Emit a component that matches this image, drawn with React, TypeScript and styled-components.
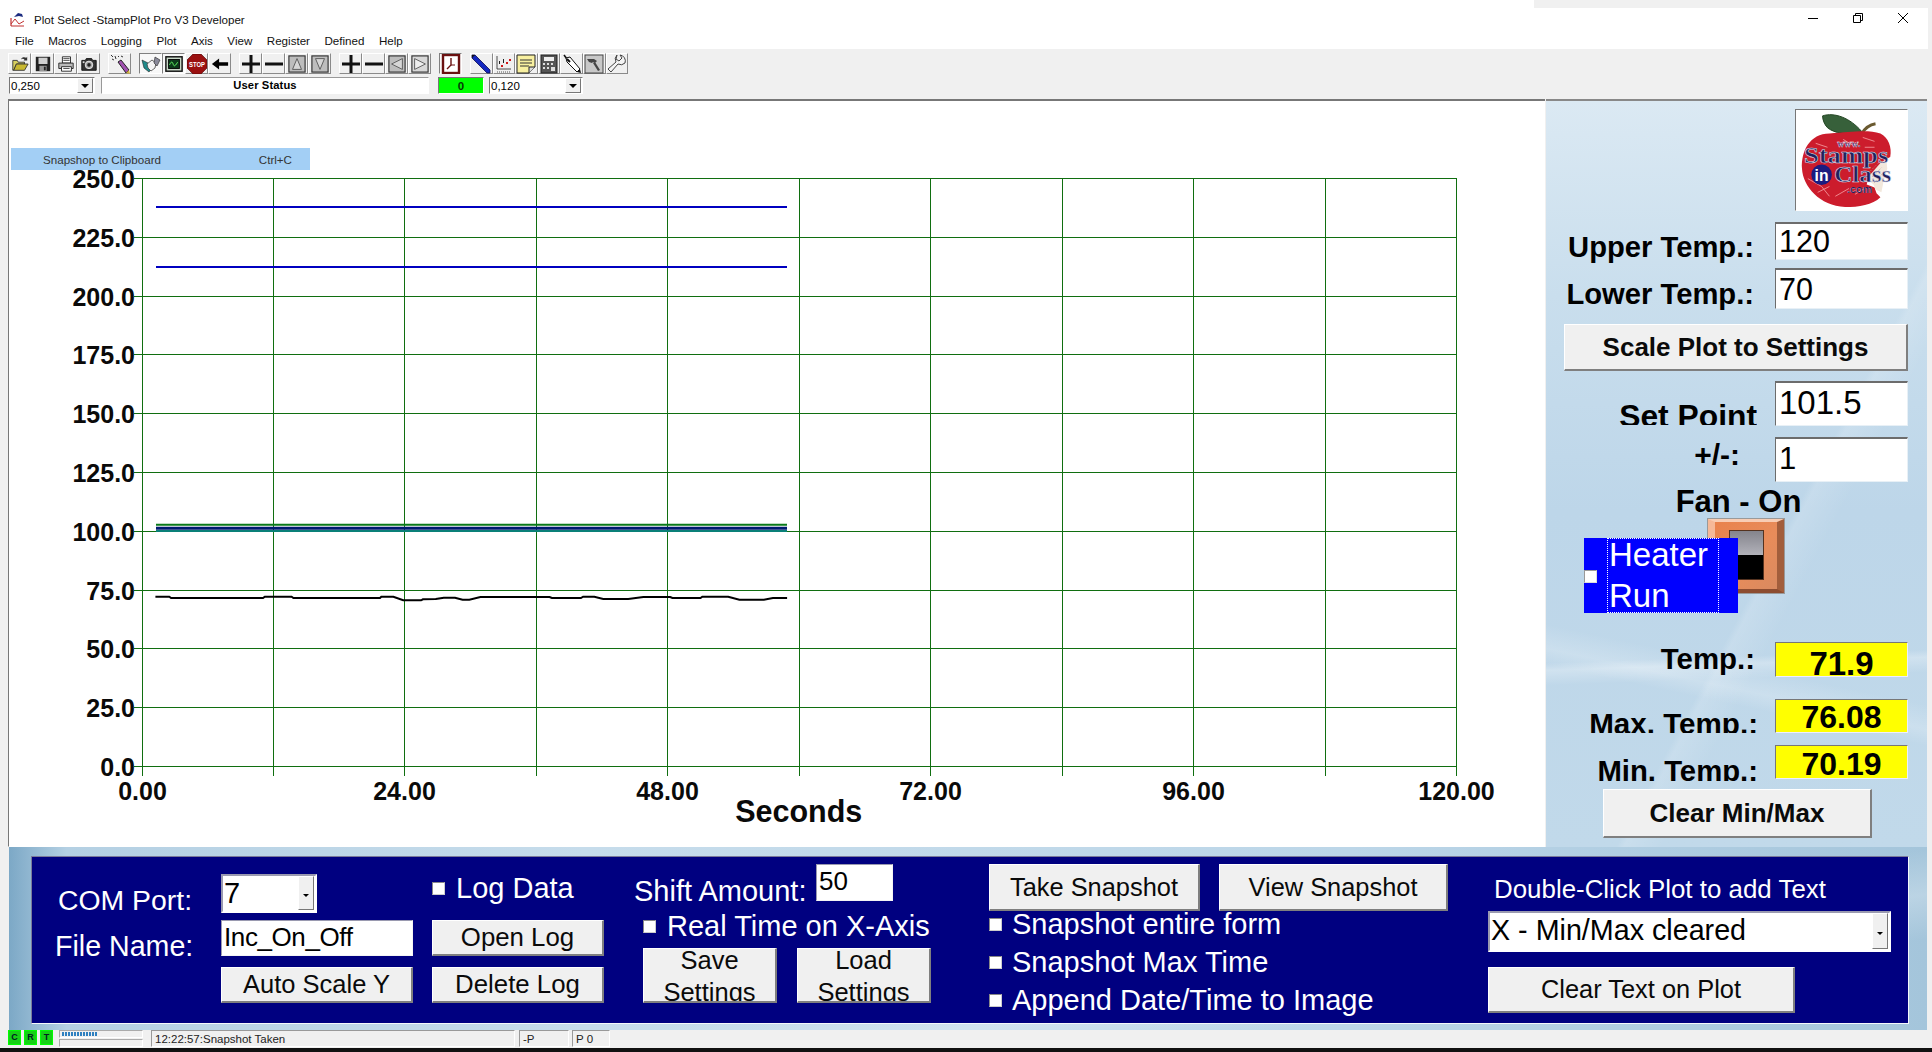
import React from 'react';
import styled, { createGlobalStyle } from 'styled-components';

const SANS = '"Liberation Sans", Arial, sans-serif';

const Global = createGlobalStyle`
  html, body { margin: 0; padding: 0; background: #f0f0f0; overflow: hidden; }
  * { box-sizing: border-box; }
  #root { width: 1932px; height: 1052px; }
`;

const Page = styled.div`
  width: 1932px; height: 1052px; display: flex; flex-direction: column;
  background: #f0f0f0; font-family: ${SANS}; color: #000; overflow: hidden;
`;

/* ---------- title + menu ---------- */
const Header = styled.header`
  height: 49px; margin-right: 4px; background: #fff; display: flex; flex-direction: column;
`;
const TopStrip = styled.div`
  height: 8px; margin-left: 1534px; margin-right: -4px; background: #f0f0f0;
`;
const TitleRow = styled.div`
  height: 23px; display: flex; align-items: center; padding: 0 0 0 10px; font-size: 11.6px; color: #111;
`;
const TitleText = styled.span`
  margin-left: 9px; flex: 1;
`;
const WinButtons = styled.div`
  display: flex; gap: 35px; padding-right: 20px; align-items: center; margin-top: -3px;
`;
const MenuRow = styled.nav`
  height: 18px; display: flex; gap: 14.5px; padding-left: 15px; font-size: 11.6px; align-items: center; color: #111;
`;

/* ---------- toolbar ---------- */
const Toolbar = styled.div`
  height: 50px; padding: 4px 0 0 8px; display: flex; flex-direction: column; gap: 3px;
`;
const ToolRow = styled.div`
  display: flex; height: 21px; gap: 8px;
`;
const ToolGroup = styled.div`
  display: flex;
`;
const ToolBtn = styled.div<{ $pressed?: boolean; $w?: number }>`
  width: ${p => p.$w ?? 23}px; height: 21px; display: flex; align-items: center; justify-content: center;
  background: ${p => (p.$pressed ? '#f8f8f8' : '#f0f0f0')};
  border-style: solid; border-width: 1px;
  border-color: ${p => (p.$pressed ? '#808080 #fff #fff #808080' : '#fff #8a8a8a #8a8a8a #fff')};
`;
const StatusRow = styled.div`
  display: flex; height: 17px; align-items: stretch;
`;
const SmallCombo = styled.div<{ $w: number; $ml?: number }>`
  width: ${p => p.$w}px; margin-left: ${p => p.$ml ?? 0}px; display: flex; background: #fff;
  border: 1px solid; border-color: #777 #fff #fff #777; font-size: 11.5px; line-height: 16px; padding-left: 1px;
`;
const SmallComboText = styled.span`
  flex: 1;
`;
const SmallDrop = styled.span`
  width: 16px; margin: 0 1px 0 0; background: #f0f0f0; display: flex; align-items: center; justify-content: center;
  border: 1px solid; border-color: #fff #777 #777 #fff;
`;
const DropArrow = styled.i<{ $s?: number }>`
  display: block; width: 0; height: 0;
  border-left: ${p => p.$s ?? 4}px solid transparent; border-right: ${p => p.$s ?? 4}px solid transparent;
  border-top: ${p => p.$s ?? 4}px solid #000;
`;
const UserStatus = styled.div`
  width: 328px; margin-left: 6px; background: #fff; border: 1px solid; border-color: #999 #fff #fff #999;
  text-align: center; font-weight: 700; font-size: 11.2px; line-height: 15px; letter-spacing: .1px;
`;
const GreenBox = styled.div`
  width: 46px; margin-left: 9px; background: #0f0; border: 1px solid; border-color: #777 #fff #fff #777;
  text-align: center; font-weight: 700; font-size: 11.5px; line-height: 16px; color: #063806;
`;

/* ---------- main ---------- */
const Main = styled.div`
  height: 748px; display: flex; padding-left: 8px; padding-right: 5px;
`;
const PlotArea = styled.div`
  position: relative; width: 1537px; height: 100%; background: #fff;
  border-left: 1px solid #777; border-top: 2px solid #777; border-bottom: 1px solid #fff;
`;
const ChartSvg = styled.svg`
  display: block; width: 100%; height: 100%;
`;
const MenuHighlight = styled.div`
  position: absolute; left: 2px; top: 47px; width: 299px; height: 22px; background: #a3cff5;
  display: flex; align-items: center; justify-content: space-between; padding: 0 18px 0 32px;
  font-size: 11.6px; color: #333;
`;

const SidePanel = styled.aside`
  width: 381px; margin-left: 1px; height: 100%; display: flex; flex-direction: column;
  padding: 8px 19px 0 18px; border-top: 2px solid #888;
  background:
    linear-gradient(118deg, transparent 60%, rgba(255,255,255,.14) 61%, transparent 66%),
    linear-gradient(178deg, transparent 74%, rgba(255,255,255,.28) 75%, transparent 77%),
    linear-gradient(12deg, transparent 22%, rgba(255,255,255,.2) 24%, transparent 27%),
    linear-gradient(180deg, #dbe9f3 0%, #c9deed 26%, #bdd6e9 55%, #c1d9ea 100%);
`;
const LogoFrame = styled.div`
  align-self: flex-end; width: 113px; height: 102px; background: #fff; margin-right: 0;
  border: 1px solid; border-color: #777 #fff #fff #777;
`;
const Row = styled.div<{ $mt: number; $h: number }>`
  display: flex; justify-content: flex-end; align-items: flex-start;
  margin-top: ${p => p.$mt}px; height: ${p => p.$h}px; flex: none;
`;
const SideLabel = styled.div<{ $fs?: number; $mr: number; $pt: number; $clip?: number }>`
  font-weight: 700; font-size: ${p => p.$fs ?? 29.2}px; line-height: ${p => (p.$fs ?? 29.2) * 1.12}px;
  margin-right: ${p => p.$mr}px; margin-top: ${p => p.$pt}px; white-space: nowrap;
  ${p => (p.$clip ? `height: ${p.$clip}px; overflow: hidden;` : '')}
`;
const SideField = styled.div<{ $fs?: number; $pt: number }>`
  width: 133px; height: 100%; background: #fff; border: 1px solid; border-color: #6c6c6c #e8f0f6 #e8f0f6 #6c6c6c;
  border-top-width: 2px; border-left-width: 1px; overflow: hidden;
  font-size: ${p => p.$fs ?? 31}px; line-height: 34px; padding: ${p => p.$pt}px 0 0 3px;
`;
const YellowField = styled.div<{ $fs?: number; $pt: number }>`
  width: 133px; height: 100%; background: #ff0; border: 1px solid; border-color: #777 #eef #eef #777; overflow: hidden;
  font-weight: 700; font-size: ${p => p.$fs ?? 32}px; line-height: 34px; text-align: center; padding-top: ${p => p.$pt}px;
`;
const GreyButton = styled.div<{ $fs: number; $bold?: boolean; $w?: number; $mr?: number }>`
  ${p => (p.$w ? `width: ${p.$w}px;` : 'width: 100%;')} height: 100%; background: #f0f0f0; flex: none;
  margin-right: ${p => p.$mr ?? 0}px;
  display: flex; align-items: center; justify-content: center;
  border: 1px solid; border-color: #fff #7f7f7f #7f7f7f #fff; border-width: 1px 2px 2px 1px;
  font-size: ${p => p.$fs}px; font-weight: ${p => (p.$bold ? 700 : 400)}; white-space: nowrap; color: #0a0a0a;
`;
const FanTitle = styled.div`
  margin-top: 2px; height: 34px; padding-left: 5px; text-align: center; font-weight: 700; font-size: 31px; line-height: 36px; flex: none;
`;
const ToggleZone = styled.div`
  position: relative; margin-top: 1px; height: 94px; padding-left: 144px; flex: none;
`;
const CopperFrame = styled.div`
  width: 76px; height: 74px; padding: 8px 0 0 0; display: flex; justify-content: center;
  background: linear-gradient(135deg, #e9824c 0%, #e88c5a 55%, #d98a60 100%);
  border-style: solid; border-width: 3px 7px 4px 7px;
  border-color: #f8cdb4 #a25e3c #8c4c30 #f6b998;
  outline: 1px solid #999; outline-offset: 0;
`;
const SwitchWindow = styled.div`
  width: 35px; height: 50px; display: flex; flex-direction: column; border: 1px solid #54321f;
`;
const SwitchTop = styled.div`
  flex: 1; background: linear-gradient(180deg, #84848c 0%, #b2b2ba 100%);
`;
const SwitchBottom = styled.div`
  flex: 1; background: #000;
`;
const HeaterCheck = styled.div`
  position: absolute; left: 20px; top: 19px; width: 154px; height: 75px; background: #00f;
  display: flex; align-items: center; color: #fff;
`;
const HeaterBoxIcon = styled.div`
  width: 13px; height: 13px; background: #fff; border: 1px solid; border-color: #999 #ddd #ddd #999; margin-right: 10px; flex: none; margin-top: 2px;
`;
const HeaterLabel = styled.div`
  width: 112px; height: 75px; border: 1px dotted #fff; padding-left: 1px; font-size: 33px; line-height: 41px; overflow: hidden;
`;
const HeaterText = styled.div`
  margin-top: -5px;
`;

/* ---------- bottom ---------- */
const BottomPanel = styled.section`
  height: 183px; margin: 0 5px 0 9px; padding: 9px 18px 6px 22px; flex: none;
  background:
    linear-gradient(172deg, transparent 60%, rgba(255,255,255,.25) 70%, transparent 80%),
    linear-gradient(90deg, #7ca8c6 0, #b4d0e3 3%, #c6dceb 30%, #bcd6e8 70%, #a4c5db 100%);
`;
const Navy = styled.div`
  height: 168px; display: flex; background: #000080; color: #fff; border: 1px solid;
  border-color: #7a7a9a #f4f8fb #f4f8fb #7a7a9a;
`;
const Col = styled.div<{ $ml: number; $w: number; $pt: number }>`
  margin-left: ${p => p.$ml}px; width: ${p => p.$w}px; padding-top: ${p => p.$pt}px; display: flex; flex-direction: column; flex: none;
`;
const FlowRow = styled.div<{ $h: number; $mt?: number; $pl?: number }>`
  display: flex; align-items: flex-start; height: ${p => p.$h}px; flex: none;
  margin-top: ${p => p.$mt ?? 0}px; padding-left: ${p => p.$pl ?? 0}px;
`;
const FormLabel = styled.div<{ $w: number; $fs?: number; $pt?: number; $pl?: number }>`
  width: ${p => p.$w}px; flex: none; font-size: ${p => p.$fs ?? 28.4}px; line-height: 32px; white-space: nowrap;
  padding-top: ${p => p.$pt ?? 0}px; padding-left: ${p => p.$pl ?? 0}px;
`;
const ComboBox = styled.div<{ $w: number; $fs: number }>`
  width: ${p => p.$w}px; height: 100%; background: #fff; display: flex; color: #000;
  border: 2px solid; border-color: #9a9ab0 #fff #fff #9a9ab0;
  font-size: ${p => p.$fs}px; line-height: 34px; padding: 0 1px 1px 1px;
`;
const ComboText = styled.span`
  flex: 1; white-space: nowrap;
`;
const ComboDrop = styled.span`
  width: 16px; background: #f0f0f0; display: flex; align-items: center; justify-content: center;
  border: 1px solid; border-color: #fff #777 #777 #fff; padding-top: 4px;
`;
const WhiteField = styled.div<{ $w: number; $fs?: number; $ls?: number }>`
  width: ${p => p.$w}px; height: 100%; flex: none; background: #fff; color: #000; border: 1px solid;
  border-color: #9a9ab0 #f4f4f4 #f4f4f4 #9a9ab0; font-size: ${p => p.$fs ?? 28}px; line-height: 32px; padding-left: 2px;
  letter-spacing: ${p => p.$ls ?? 0}px;
`;
const CheckLine = styled.div<{ $h: number; $gap: number; $pl?: number; $mt?: number }>`
  display: flex; align-items: center; height: ${p => p.$h}px; gap: ${p => p.$gap}px; flex: none;
  padding-left: ${p => p.$pl ?? 0}px; margin-top: ${p => p.$mt ?? 0}px; font-size: 29px; line-height: 32px; white-space: nowrap;
`;
const CheckBox = styled.span`
  width: 13px; height: 13px; background: #fff; flex: none; border: 1px solid; border-color: #888 #ccc #ccc #888;
`;
const TwoLineBtn = styled.div<{ $w: number }>`
  width: ${p => p.$w}px; height: 100%; flex: none; background: #f0f0f0; color: #0a0a0a; overflow: hidden; text-align: center;
  border: 1px solid; border-color: #fff #7f7f7f #7f7f7f #fff; border-width: 1px 2px 2px 1px;
  font-size: 25.5px; line-height: 32px;
`;
const TwoLineText = styled.div`
  margin-top: -5px;
`;
const Gap = styled.span<{ $w: number }>`
  width: ${p => p.$w}px; flex: none;
`;

/* ---------- status ---------- */
const StatusBar = styled.footer`
  height: 18px; display: flex; padding-left: 8px; flex: none; font-size: 11.5px; color: #222;
`;
const Led = styled.span`
  width: 13px; height: 15px; margin-right: 3px; background: #16d016; border: 1px solid #0f0; color: #022; flex: none;
  font-weight: 700; font-size: 9px; line-height: 13px; text-align: center;
`;
const ProgressBox = styled.div`
  width: 84px; margin-left: 3px; height: 18px; display: flex; flex-direction: column; gap: 1px;
`;
const ProgressTrack = styled.div`
  height: 8px; border: 1px solid; border-color: #aaa #fff #fff #aaa; padding: 1px 0 0 2px;
`;
const ProgressFill = styled.div`
  width: 36px; height: 4px; background: repeating-linear-gradient(90deg, #2f80c0 0 2px, transparent 2px 3px);
`;
const Cell = styled.div<{ $w: number; $ml: number }>`
  width: ${p => p.$w}px; margin-left: ${p => p.$ml}px; height: 17px; flex: none; border: 1px solid;
  border-color: #999 #fff #fff #999; padding-left: 3px; line-height: 17px; overflow: hidden; white-space: nowrap;
`;
const Taskbar = styled.div`
  height: 4px; background: #111; flex: none;
`;

/* ---------- icons ---------- */
const Ico = ({ children, s = 18 }: { children: React.ReactNode; s?: number }) => (
  <svg width={s} height={s} viewBox="0 0 20 20" aria-hidden="true">{children}</svg>
);

const AppIcon = () => (
  <svg width="15" height="15" viewBox="0 0 15 15" aria-hidden="true">
    <path d="M1 14V6M1 14h13" stroke="#c03030" strokeWidth="1.2" fill="none" />
    <path d="M1 12L5 7l4 5 5-3" stroke="#c03030" strokeWidth="1" fill="none" />
    <path d="M4 5L8 1l4 1 1 3-4-1z" fill="#1c2c80" />
  </svg>
);

const icons: Record<string, React.ReactNode> = {
  open: <Ico><path d="M2 6h5l1 2h7v2H6l-3 7H2z" fill="#d8d060" stroke="#333" /><path d="M6 10h13l-4 7H3z" fill="#c8b830" stroke="#333" /><path d="M11 5c1-3 4-3 6-2l1-1v4h-4l1-1c-1-1-3-1-4 0z" fill="#333" /></Ico>,
  save: <Ico><rect x="2" y="2" width="16" height="16" fill="#222" /><rect x="5" y="3" width="10" height="7" fill="#cfcfcf" /><rect x="6" y="12" width="8" height="6" fill="#999" /><rect x="11" y="13" width="2" height="4" fill="#222" /></Ico>,
  print: <Ico><path d="M6 2h9v7H6z" fill="#fff" stroke="#222" /><path d="M7 4h7M7 6h7" stroke="#444" /><path d="M2 9h16v6H2z" fill="#bbb" stroke="#222" /><path d="M5 13h11v5H5z" fill="#fff" stroke="#222" /><path d="M7 15h7" stroke="#444" /></Ico>,
  cam: <Ico><path d="M2 6h4l1-2h6l1 2h4v11H2z" fill="#333" stroke="#111" /><circle cx="10" cy="11" r="4.2" fill="#aaa" stroke="#eee" /><circle cx="10" cy="11" r="2" fill="#222" /><rect x="3" y="7" width="2" height="2" fill="#ddd" /></Ico>,
  wand: <Ico s={20}><path d="M8 8l3-2 8 10-3 3z" fill="#a050b0" stroke="#222" /><path d="M16 19l3-3 1 4z" fill="#d0b040" /><path d="M2 5l2 1M5 2l1 3M1 1l2 2M8 3l1-1M11 2l2 1" stroke="#333" /></Ico>,
  hand: <Ico s={20}><path d="M1 6l6 3 4 5-3 4-5-4z" fill="#1f8a8a" stroke="#222" strokeWidth=".6" /><path d="M6 10l5-4 4 3-1 5-4 3-3-3z" fill="#f4f4f4" stroke="#444" strokeWidth=".8" /><path d="M14 3l5 3-3 6-3-3z" fill="#8a8a9a" stroke="#222" strokeWidth=".6" /></Ico>,
  scope: <Ico><rect x="1" y="2" width="18" height="16" fill="#c8d8c8" stroke="#111" strokeWidth="1.6" /><rect x="4" y="5" width="12" height="10" fill="#0a3a1a" stroke="#000" /><path d="M5 11c2-4 3-4 4-1s2 3 5-2" stroke="#6f6" fill="none" /></Ico>,
  stop: <Ico s={20}><path d="M6 0h8l6 6v8l-6 6H6l-6-6V6z" fill="#9a1010" stroke="#400" strokeWidth=".6" /><text x="10" y="13" fontFamily={SANS} fontSize="7.5" fontWeight="700" fill="#fff" textAnchor="middle" textLength="16" lengthAdjust="spacingAndGlyphs">STOP</text></Ico>,
  back: <Ico><path d="M1 10l8-6v4h10v4H9v4z" fill="#000" /></Ico>,
  plus: <Ico s={20}><path d="M1 10h18M10 1v18" stroke="#111" strokeWidth="3" /></Ico>,
  minus: <Ico s={20}><path d="M1 10h18" stroke="#111" strokeWidth="3" /></Ico>,
  up: <Ico><rect x="1" y="1" width="18" height="18" fill="#bdbdbd" stroke="#333" strokeWidth="1.3" /><path d="M10 4l5 12H5z" fill="#d6d6d6" stroke="#555" /></Ico>,
  down: <Ico><rect x="1" y="1" width="18" height="18" fill="#bdbdbd" stroke="#333" strokeWidth="1.3" /><path d="M10 16L5 4h10z" fill="#d6d6d6" stroke="#555" /></Ico>,
  left: <Ico><rect x="1" y="1" width="18" height="18" fill="#bdbdbd" stroke="#333" strokeWidth="1.3" /><path d="M4 10l12-6v12z" fill="#d6d6d6" stroke="#555" /></Ico>,
  right: <Ico><rect x="1" y="1" width="18" height="18" fill="#d8d8d8" stroke="#333" strokeWidth="1.3" /><path d="M16 10L4 4v12z" fill="#eee" stroke="#555" /></Ico>,
  clock: <Ico s={20}><rect x="2" y="1" width="16" height="18" fill="#fff" stroke="#6a1010" strokeWidth="2.4" /><path d="M10 4v7l-4 4" stroke="#6a1010" strokeWidth="1.4" fill="none" /><path d="M10 11h4" stroke="#6a1010" /></Ico>,
  pen: <Ico s={20}><path d="M1 1l3-0 15 15v3h-3L1 4z" fill="#1428c0" stroke="#0a0a50" strokeWidth=".8" /><path d="M1 1l3 0-3 3z" fill="#111" /></Ico>,
  scat: <Ico s={20}><path d="M3 2v13h14" stroke="#222" fill="none" strokeWidth=".8" /><path d="M5 7h1v3H5zM9 5h1v4H9z" fill="#222" /><path d="M12 8h2v2h-2zM15 5h2v2h-2zM7 11h2v2H7z" fill="#d01818" /><path d="M3 18h14" stroke="#555" strokeDasharray="1 1" /></Ico>,
  note: <Ico s={20}><path d="M1 1h18v12l-6 6H1z" fill="#f8f0a0" stroke="#222" /><path d="M4 6h12M4 9h12M4 12h9" stroke="#333" /><path d="M13 19v-6h6" fill="#ddd" stroke="#222" /></Ico>,
  calc: <Ico s={20}><rect x="2" y="1" width="16" height="18" fill="#555" stroke="#222" /><rect x="5" y="3" width="10" height="4" fill="#eee" /><path d="M4 9h2v2H4zM8 9h2v2H8zM12 9h2v2h-2zM4 13h2v2H4zM8 13h2v2H8zM12 13h4v4h-4z" fill="#ddd" /></Ico>,
  probe: <Ico s={20}><path d="M2 1l3 4" stroke="#111" strokeWidth="1.6" /><path d="M4 4l4-1 10 12-3 3L5 8z" fill="#fff" stroke="#111" /><path d="M5 5l3 3" stroke="#111" strokeWidth="2" /><path d="M15 18l3-3 1 4z" fill="#111" /></Ico>,
  hammer: <Ico s={20}><rect x="1" y="1" width="18" height="18" fill="#c8c8c8" stroke="#444" /><path d="M3 5h7l3 2-2 2-2-1-1 1-3-1zM9 9l2-1 5 8-2 1z" fill="#444" /></Ico>,
  wrench: <Ico s={20}><path d="M13 1a6 6 0 0 1 5 8 6 6 0 0 1-7 1l-7 8-3-3 8-7a6 6 0 0 1 1-7l-1 4 3 2 3-3z" fill="#f4f4f4" stroke="#444" /></Ico>,
};

const Logo = () => (
  <svg width="111" height="100" viewBox="0 0 113 102" aria-label="Stamps in Class logo">
    <path d="M27 6c12-4 28 2 40 16-14 4-28 2-35-4-3-3-5-8-5-12z" fill="#37603a" stroke="#1f421f" />
    <path d="M67 24c3-5 8-9 14-10" stroke="#6a5a30" strokeWidth="3" fill="none" />
    <path d="M34 24C14 24 5 42 6 60c1 18 18 38 44 39 14 0 28-2 36-10l-4-4-2-6-8-3 2-8 8-6 6-6 4-6 4-2c2-10-2-20-10-24-12-4-28-2-52 0z" fill="#cc1c2c" />
    <path d="M72 70l14-16 6-4 1 10-4 14-2 10-6-3-2-5z" fill="#f2e8dc" />
    <path d="M76 62l8-8M78 68l9-9M80 74l8-9" stroke="#b08a80" strokeDasharray="1 1.5" />
    <path d="M12 70l14 8 8 10M20 34l12 4M48 30l10 6M68 28l12 4M70 38h10M22 84l12-6M40 88l14-8M60 86l10-6M14 48h6" stroke="#f08a90" strokeWidth="1" fill="none" />
    <text x="42" y="38" fontFamily="Liberation Serif, serif" fontSize="10" fontWeight="700" fill="#1c1c70" stroke="#fff" strokeWidth=".3">www.</text>
    <text x="51" y="54" fontFamily="Liberation Serif, serif" fontSize="23" fontWeight="700" fill="#20205e" stroke="#dfe0f0" strokeWidth=".5" textAnchor="middle" textLength="86" lengthAdjust="spacingAndGlyphs">Stamps</text>
    <circle cx="26" cy="66" r="10.5" fill="#1c1c80" />
    <text x="26" y="72" fontFamily={SANS} fontSize="16" fontWeight="700" fill="#fff" textAnchor="middle">in</text>
    <text x="68" y="73" fontFamily="Liberation Serif, serif" fontSize="23" fontWeight="700" fill="#20205e" stroke="#dfe0f0" strokeWidth=".5" textAnchor="middle" textLength="58" lengthAdjust="spacingAndGlyphs">Class</text>
    <text x="52" y="85" fontFamily={SANS} fontSize="11" fontWeight="700" fill="#1c1c60" stroke="#fff" strokeWidth=".2">.com</text>
  </svg>
);

/* ---------- chart data ---------- */
const X0 = 141.5, XSTEP = 131.45, Y0 = 178, YSTEP = 58.8;
const xs = Array.from({ length: 11 }, (_, i) => Math.round(X0 + i * XSTEP) + 0.5);
const ys = Array.from({ length: 11 }, (_, i) => Math.round(Y0 + i * YSTEP) + 0.5);
const yLabels = ['250.0', '225.0', '200.0', '175.0', '150.0', '125.0', '100.0', '75.0', '50.0', '25.0', '0.0'];
const xLabels = ['0.00', '24.00', '48.00', '72.00', '96.00', '120.00'];
const tempRaw = [[57,290],[88,290],[92,294],[298,294],[302,290],[362,290],[366,294],[560,294],[563,290],[590,290],[612,301],[652,301],[656,298],[685,297],[703,293],[728,293],[745,299],[760,299],[785,291],[940,291],[945,294],[1010,294],[1015,290],[1040,290],[1060,297],[1116,297],[1150,291],[1210,291],[1215,294],[1278,294],[1282,290],[1340,290],[1365,299],[1420,299],[1440,294],[1472,294]];
const tempPts = tempRaw.map(([a, b]) => `${(130 + a / 2.24).toFixed(1)},${(500 + b / 3).toFixed(1)}`).join(' ');

const Chart = () => (
  <ChartSvg width={1536} height={745} viewBox="9 101 1536 745" preserveAspectRatio="xMinYMin meet">
    <g stroke="#106e10" strokeWidth="1" shapeRendering="crispEdges">
      {xs.map(x => <line key={x} x1={x} x2={x} y1={Y0} y2={776} />)}
      {ys.map(y => <line key={y} x1={134} x2={1456} y1={y} y2={y} />)}
    </g>
    <g fontFamily={SANS} fontWeight="700" fontSize="25" fill="#0a0a0a">
      {yLabels.map((t, i) => <text key={t} x={135} y={ys[i] + 9} textAnchor="end">{t}</text>)}
      {xLabels.map((t, i) => <text key={t} x={xs[i * 2]} y={800} textAnchor="middle">{t}</text>)}
      <text x={798.7} y={822} textAnchor="middle" fontSize="30.5">Seconds</text>
    </g>
    <g fill="none">
      <line x1={156} x2={787} y1={207} y2={207} stroke="#0000c0" strokeWidth="2" />
      <line x1={156} x2={787} y1={267} y2={267} stroke="#0000c0" strokeWidth="2" />
      <line x1={156} x2={787} y1={524.7} y2={524.7} stroke="#0a7a1a" strokeWidth="2" />
      <line x1={156} x2={787} y1={528.3} y2={528.3} stroke="#001a70" strokeWidth="3" />
      <line x1={156} x2={787} y1={531} y2={531} stroke="#0a8078" strokeWidth="2" />
      <polyline points={tempPts} stroke="#000" strokeWidth="2" />
    </g>
  </ChartSvg>
);

const menus = ['File', 'Macros', 'Logging', 'Plot', 'Axis', 'View', 'Register', 'Defined', 'Help'];
const toolGroups: { w?: number; items: string[]; pressed?: string[] }[] = [
  { items: ['open', 'save', 'print', 'cam'] },
  { items: ['wand'] },
  { items: ['hand', 'scope', 'stop', 'back'], pressed: ['hand', 'scope'] },
  { items: ['plus', 'minus', 'up', 'down'] },
  { items: ['plus', 'minus', 'left', 'right'] },
  { items: ['clock'], pressed: ['clock'] },
  { w: 22.6, items: ['pen', 'scat', 'note', 'calc', 'probe', 'hammer', 'wrench'] },
];

export default function App() {
  return (
    <Page>
      <Global />
      <Header>
        <TopStrip />
        <TitleRow>
          <AppIcon />
          <TitleText>Plot Select -StampPlot Pro V3 Developer</TitleText>
          <WinButtons>
            <svg width="10" height="10" viewBox="0 0 10 10" aria-hidden="true"><path d="M0 5.5h10" stroke="#000" /></svg>
            <svg width="10" height="10" viewBox="0 0 10 10" aria-hidden="true"><path d="M.5 2.5h7v7h-7zM2.5 2.5v-2h7v7h-2" fill="none" stroke="#000" /></svg>
            <svg width="10" height="10" viewBox="0 0 10 10" aria-hidden="true"><path d="M0 0l10 10M10 0L0 10" stroke="#000" /></svg>
          </WinButtons>
        </TitleRow>
        <MenuRow>{menus.map(m => <span key={m}>{m}</span>)}</MenuRow>
      </Header>

      <Toolbar>
        <ToolRow>
          {toolGroups.map((g, i) => (
            <ToolGroup key={i}>
              {g.items.map((it, j) => (
                <ToolBtn key={j} $w={g.w} $pressed={g.pressed?.includes(it)}>{icons[it]}</ToolBtn>
              ))}
            </ToolGroup>
          ))}
        </ToolRow>
        <StatusRow>
          <SmallCombo $w={86} $ml={1}>
            <SmallComboText>0,250</SmallComboText>
            <SmallDrop><DropArrow /></SmallDrop>
          </SmallCombo>
          <UserStatus>User Status</UserStatus>
          <GreenBox>0</GreenBox>
          <SmallCombo $w={94} $ml={5}>
            <SmallComboText>0,120</SmallComboText>
            <SmallDrop><DropArrow /></SmallDrop>
          </SmallCombo>
        </StatusRow>
      </Toolbar>

      <Main>
        <PlotArea>
          <Chart />
          <MenuHighlight><span>Snapshop to Clipboard</span><span>Ctrl+C</span></MenuHighlight>
        </PlotArea>
        <SidePanel>
          <LogoFrame><Logo /></LogoFrame>
          <Row $mt={11} $h={38}>
            <SideLabel $mr={21} $pt={9}>Upper Temp.:</SideLabel>
            <SideField $pt={0} $fs={30.5}>120</SideField>
          </Row>
          <Row $mt={8} $h={41}>
            <SideLabel $mr={21} $pt={10}>Lower Temp.:</SideLabel>
            <SideField $pt={2} $fs={30.5}>70</SideField>
          </Row>
          <Row $mt={15} $h={47}>
            <GreyButton $fs={26} $bold>Scale Plot to Settings</GreyButton>
          </Row>
          <Row $mt={10} $h={45}>
            <SideLabel $fs={31.8} $mr={18} $pt={18} $clip={26}>Set Point</SideLabel>
            <SideField $pt={3} $fs={33}>101.5</SideField>
          </Row>
          <Row $mt={11} $h={45}>
            <SideLabel $fs={30} $mr={35} $pt={1}>+/-:</SideLabel>
            <SideField $pt={3}>1</SideField>
          </Row>
          <FanTitle>Fan - On</FanTitle>
          <ToggleZone>
            <CopperFrame>
              <SwitchWindow><SwitchTop /><SwitchBottom /></SwitchWindow>
            </CopperFrame>
            <HeaterCheck>
              <HeaterBoxIcon />
              <HeaterLabel><HeaterText>Heater<br />Run</HeaterText></HeaterLabel>
            </HeaterCheck>
          </ToggleZone>
          <Row $mt={29} $h={35}>
            <SideLabel $fs={29.4} $mr={20} $pt={1}>Temp.:</SideLabel>
            <YellowField $fs={33} $pt={4}>71.9</YellowField>
          </Row>
          <Row $mt={22} $h={34}>
            <SideLabel $fs={29.6} $mr={17} $pt={8} $clip={26}>Max. Temp.:</SideLabel>
            <YellowField $pt={0}>76.08</YellowField>
          </Row>
          <Row $mt={12} $h={34}>
            <SideLabel $fs={29.3} $mr={17} $pt={10} $clip={26}>Min. Temp.:</SideLabel>
            <YellowField $pt={1}>70.19</YellowField>
          </Row>
          <Row $mt={10} $h={49}>
            <GreyButton $fs={26} $bold $w={269} $mr={36}>Clear Min/Max</GreyButton>
          </Row>
        </SidePanel>
      </Main>

      <BottomPanel>
        <Navy>
          <Col $ml={23} $w={358} $pt={17}>
            <FlowRow $h={39}>
              <FormLabel $w={166} $pt={10} $pl={3}>COM Port:</FormLabel>
              <ComboBox $w={96} $fs={29}>
                <ComboText>7</ComboText>
                <ComboDrop><DropArrow $s={3} /></ComboDrop>
              </ComboBox>
            </FlowRow>
            <FlowRow $h={36} $mt={7}>
              <FormLabel $w={166} $fs={28.6} $pt={10}>File Name:</FormLabel>
              <WhiteField $w={192} $fs={26} $ls={-0.4}>Inc_On_Off</WhiteField>
            </FlowRow>
            <FlowRow $h={36} $mt={11} $pl={166}>
              <GreyButton $fs={25.5}>Auto Scale Y</GreyButton>
            </FlowRow>
          </Col>
          <Col $ml={19} $w={172} $pt={15}>
            <CheckLine $h={32} $gap={11}><CheckBox />Log Data</CheckLine>
            <FlowRow $h={36} $mt={16}><GreyButton $fs={25.8}>Open Log</GreyButton></FlowRow>
            <FlowRow $h={36} $mt={11}><GreyButton $fs={25.8}>Delete Log</GreyButton></FlowRow>
          </Col>
          <Col $ml={30} $w={297} $pt={7}>
            <FlowRow $h={37}>
              <FormLabel $w={182} $fs={29} $pt={11}>Shift Amount:</FormLabel>
              <WhiteField $w={77} $fs={26}>50</WhiteField>
            </FlowRow>
            <CheckLine $h={32} $gap={11} $pl={9} $mt={9}><CheckBox />Real Time on X-Axis</CheckLine>
            <FlowRow $h={55} $mt={6} $pl={9}>
              <TwoLineBtn $w={134}><TwoLineText>Save<br />Settings</TwoLineText></TwoLineBtn>
              <Gap $w={20} />
              <TwoLineBtn $w={134}><TwoLineText>Load<br />Settings</TwoLineText></TwoLineBtn>
            </FlowRow>
          </Col>
          <Col $ml={58} $w={459} $pt={7}>
            <FlowRow $h={47}>
              <GreyButton $fs={25.4} $w={211}>Take Snapshot</GreyButton>
              <Gap $w={19} />
              <GreyButton $fs={25.4} $w={229}>View Snapshot</GreyButton>
            </FlowRow>
            <CheckLine $h={38} $gap={10} $mt={-6}><CheckBox />Snapshot entire form</CheckLine>
            <CheckLine $h={38} $gap={10}><CheckBox />Snapshot Max Time</CheckLine>
            <CheckLine $h={38} $gap={10}><CheckBox />Append Date/Time to Image</CheckLine>
          </Col>
          <Col $ml={40} $w={403} $pt={16}>
            <FormLabel $w={403} $fs={25.9} $pl={6}>Double-Click Plot to add Text</FormLabel>
            <FlowRow $h={41} $mt={6}>
              <ComboBox $w={403} $fs={28.7}>
                <ComboText>X - Min/Max cleared</ComboText>
                <ComboDrop><DropArrow $s={3} /></ComboDrop>
              </ComboBox>
            </FlowRow>
            <FlowRow $h={46} $mt={15}>
              <GreyButton $fs={25.4} $w={307}>Clear Text on Plot</GreyButton>
            </FlowRow>
          </Col>
        </Navy>
      </BottomPanel>

      <StatusBar>
        <Led>C</Led><Led>R</Led><Led>T</Led>
        <ProgressBox>
          <ProgressTrack><ProgressFill /></ProgressTrack>
          <ProgressTrack />
        </ProgressBox>
        <Cell $w={364} $ml={8}>12:22:57:Snapshot Taken</Cell>
        <Cell $w={50} $ml={4}>-P</Cell>
        <Cell $w={38} $ml={3}>P 0</Cell>
      </StatusBar>
      <Taskbar />
    </Page>
  );
}
